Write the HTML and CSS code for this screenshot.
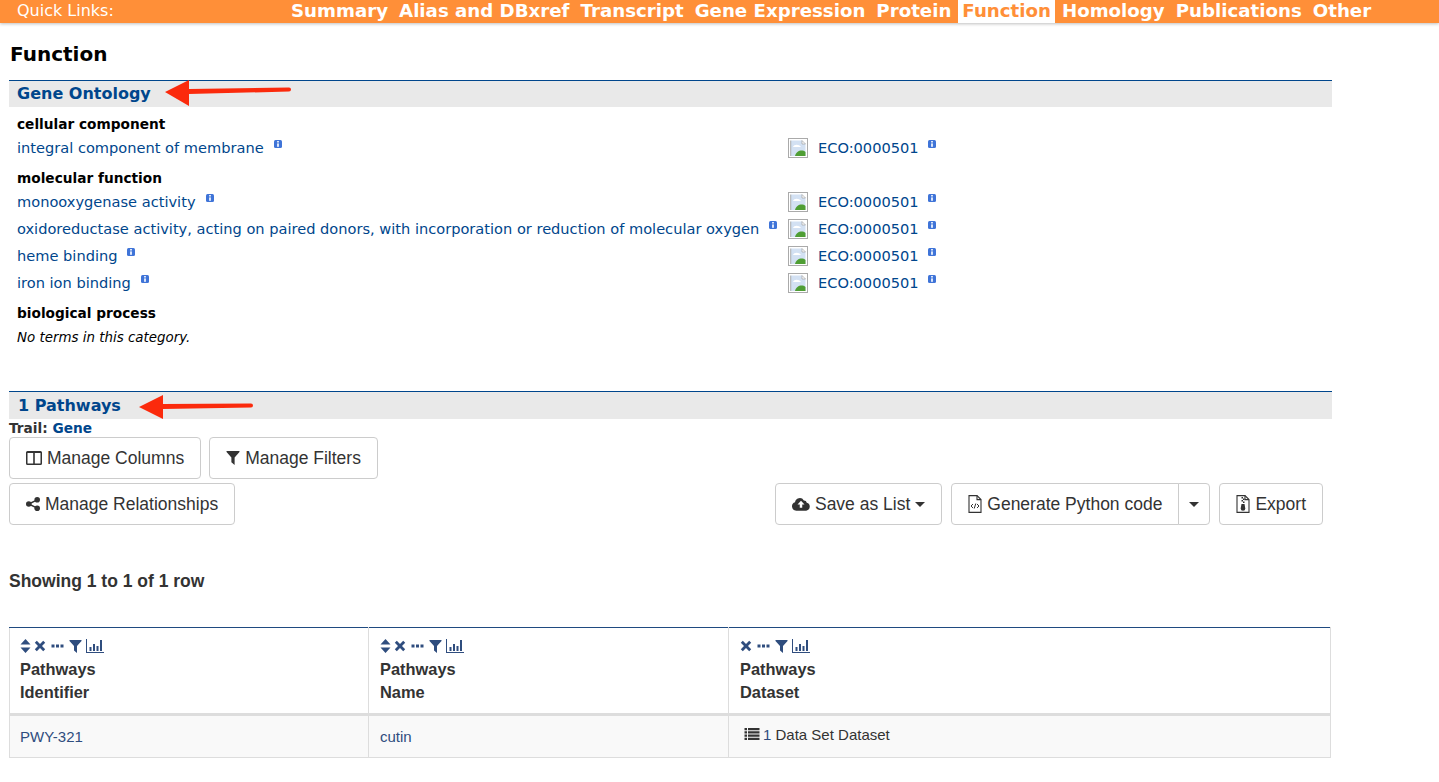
FILE: index.html
```html
<!DOCTYPE html>
<html lang="en">
<head>
  <meta charset="UTF-8">
  <title>Function</title>
  <link rel="stylesheet" href="styles.css">
</head>
<body>
  <svg class="icon-defs" width="0" height="0">
    <symbol id="broken" viewBox="0 0 20 20">
      <rect x="0.5" y="0.5" width="19" height="19" fill="#fff" stroke="#aaa"/>
      <path d="M3 2.500h11l3.500 3.500v12H3z" fill="#d3e1f3"/>
      <path d="M14 2.500v3.500h3.500z" fill="#fff" stroke="#999" stroke-width="0.6"/>
      <path d="M2.700 2.500v15.500" stroke="#888" stroke-width="0.7"/>
      <path d="M5 9c1-3 6-3 8 0z" fill="#fff"/>
      <path d="M7 18c1-5 7-7 10.500-4v4z" fill="#4f9e34"/>
    </symbol>
    <symbol id="info" viewBox="0 0 8 8">
      <rect width="8" height="8" rx="1.5" fill="#3f74d8"/>
      <rect x="3" y="1" width="2" height="1.5" fill="#dbe6fa"/>
      <rect x="3" y="3.4" width="2" height="3.4" fill="#dbe6fa"/>
    </symbol>
    <symbol id="sort" viewBox="0 0 10 14">
      <path d="M5 0l5 5.500H0zM5 14L0 8.500h10z"/>
    </symbol>
    <symbol id="close" viewBox="0 0 12 12">
      <path d="M2.800 0.800L6 4l3.200-3.200 2 2L8 6l3.200 3.200-2 2L6 8l-3.200 3.200-2-2L4 6 0.800 2.800z"/>
    </symbol>
    <symbol id="dots" viewBox="0 0 12 4">
      <path d="M0 0.500h3v3H0zM4.500 0.500h3v3h-3zM9 0.500h3v3H9z"/>
    </symbol>
    <symbol id="filter" viewBox="0 0 12 13">
      <path d="M0 0h12v1L7.500 6v7l-3-2.500V6L0 1z"/>
    </symbol>
    <symbol id="chart" viewBox="0 0 18 14">
      <path d="M0 0h1v13h17v1H0z"/>
      <path d="M3.500 8h2v4h-2zM7 5h2v7H7zM10.500 7h2v5h-2zM14 1h2v11h-2z"/>
    </symbol>
    <symbol id="columns" viewBox="0 0 16 14">
      <path fill-rule="evenodd" d="M1.500 0h13A1.500 1.500 0 0 1 16 1.500v11a1.500 1.500 0 0 1-1.500 1.500h-13A1.500 1.500 0 0 1 0 12.500v-11A1.500 1.500 0 0 1 1.500 0zM1.500 2v10.500h5.700V2zM8.800 2v10.500h5.700V2z"/>
    </symbol>
    <symbol id="share" viewBox="0 0 15 15">
      <circle cx="3" cy="7.500" r="3"/>
      <circle cx="12" cy="3" r="3"/>
      <circle cx="12" cy="12" r="3"/>
      <path d="M3 7.500L12 3M3 7.500L12 12" stroke="currentColor" stroke-width="1.500"/>
    </symbol>
    <symbol id="cloud" viewBox="0 0 19 14">
      <path fill-rule="evenodd" d="M4.500 14A4.500 4.500 0 0 1 3.200 5.200 5 5 0 0 1 12.500 3.200 3 3 0 0 1 15.600 5.600 4.300 4.300 0 0 1 15 14zM9.500 3.500L5.800 7.500h2.400v3.500h2.600V7.500h2.400z"/>
    </symbol>
    <symbol id="code-file" viewBox="0 0 14 18">
      <path fill="none" stroke="currentColor" stroke-width="1.100" d="M1 0.600h8l4 4v12.800H1z"/>
      <path fill="none" stroke="currentColor" stroke-width="1.100" d="M9 0.600v4h4"/>
      <path fill="none" stroke="currentColor" stroke-width="1" d="M5 9l-2 2 2 2M9 9l2 2-2 2M7.800 8.500l-1.600 5"/>
    </symbol>
    <symbol id="zip-file" viewBox="0 0 14 18">
      <path fill="none" stroke="currentColor" stroke-width="1.100" d="M1 0.600h8l4 4v12.800H1z"/>
      <path fill="none" stroke="currentColor" stroke-width="1.100" d="M9 0.600v4h4"/>
      <path d="M5.500 2h1.500v1.500H5.500zM7 3.500h1.500V5H7zM5.500 5h1.500v1.500H5.500zM7 6.500h1.500V8H7z"/>
      <path d="M5.500 9h3l0.800 4.500a2.300 2.300 0 1 1-4.600 0z"/>
    </symbol>
    <symbol id="list" viewBox="0 0 15 12">
      <path d="M0 0h2.500v2.200H0zM3.500 0H15v2.200H3.500zM0 3.300h2.500v2.200H0zM3.500 3.300H15v2.200H3.500zM0 6.600h2.500v2.200H0zM3.500 6.600H15v2.200H3.500zM0 9.800h2.500V12H0zM3.500 9.800H15V12H3.500z"/>
    </symbol>
  </svg>

  <nav class="quick-links">
    <span class="quick-label">Quick Links:</span>
    <div class="quick-menu">
      <a href="#">Summary</a>
      <a href="#">Alias and DBxref</a>
      <a href="#">Transcript</a>
      <a href="#">Gene Expression</a>
      <a href="#">Protein</a>
      <a href="#" class="active">Function</a>
      <a href="#">Homology</a>
      <a href="#">Publications</a>
      <a href="#">Other</a>
    </div>
  </nav>

  <main class="page">
    <h1>Function</h1>

    <section class="report go-report">
      <h2 class="report-title"><a href="#">Gene Ontology</a></h2>
      <svg class="arrow arrow-go" width="126" height="28" viewBox="0 0 126 28"><path d="M0 13L24 1v9l100-1.500a1.500 1.500 0 0 1 0 4L24 15v12z" fill="#fb2a0c"/></svg>

      <h3 class="go-cat">cellular component</h3>
      <div class="go-row">
        <div class="go-term"><a href="#">integral component of membrane</a><svg class="info"><use href="#info"/></svg></div>
        <div class="go-eco"><svg class="broken"><use href="#broken"/></svg><a href="#">ECO:0000501</a><svg class="info"><use href="#info"/></svg></div>
      </div>

      <h3 class="go-cat">molecular function</h3>
      <div class="go-row">
        <div class="go-term"><a href="#">monooxygenase activity</a><svg class="info"><use href="#info"/></svg></div>
        <div class="go-eco"><svg class="broken"><use href="#broken"/></svg><a href="#">ECO:0000501</a><svg class="info"><use href="#info"/></svg></div>
      </div>
      <div class="go-row">
        <div class="go-term"><a href="#">oxidoreductase activity, acting on paired donors, with incorporation or reduction of molecular oxygen</a><svg class="info"><use href="#info"/></svg></div>
        <div class="go-eco"><svg class="broken"><use href="#broken"/></svg><a href="#">ECO:0000501</a><svg class="info"><use href="#info"/></svg></div>
      </div>
      <div class="go-row">
        <div class="go-term"><a href="#">heme binding</a><svg class="info"><use href="#info"/></svg></div>
        <div class="go-eco"><svg class="broken"><use href="#broken"/></svg><a href="#">ECO:0000501</a><svg class="info"><use href="#info"/></svg></div>
      </div>
      <div class="go-row">
        <div class="go-term"><a href="#">iron ion binding</a><svg class="info"><use href="#info"/></svg></div>
        <div class="go-eco"><svg class="broken"><use href="#broken"/></svg><a href="#">ECO:0000501</a><svg class="info"><use href="#info"/></svg></div>
      </div>

      <h3 class="go-cat">biological process</h3>
      <p class="go-empty">No terms in this category.</p>
    </section>

    <section class="report pathways-report">
      <h2 class="report-title"><a href="#"><span class="num">1</span> Pathways</a></h2>
      <svg class="arrow arrow-path" width="114" height="24" viewBox="0 0 114 24"><path d="M0 12L24 0v9l88-.5a1.500 1.500 0 0 1 0 4L24 14v10z" fill="#fb2a0c"/></svg>
      <div class="trail">Trail: <a href="#">Gene</a></div>

      <div class="toolbar">
        <div class="toolbar-row">
          <button class="btn"><svg class="btn-icon"><use href="#columns"/></svg>Manage Columns</button>
          <button class="btn"><svg class="btn-icon icon-narrow"><use href="#filter"/></svg>Manage Filters</button>
        </div>
        <div class="toolbar-row">
          <button class="btn"><svg class="btn-icon icon-narrow"><use href="#share"/></svg>Manage Relationships</button>
          <div class="toolbar-right">
            <button class="btn"><svg class="btn-icon icon-wide"><use href="#cloud"/></svg>Save as List<span class="caret"></span></button>
            <div class="btn-group">
              <button class="btn"><svg class="btn-icon icon-file"><use href="#code-file"/></svg>Generate Python code</button>
              <button class="btn btn-caret"><span class="caret"></span></button>
            </div>
            <button class="btn"><svg class="btn-icon icon-file"><use href="#zip-file"/></svg>Export</button>
          </div>
        </div>
      </div>

      <div class="showing">Showing 1 to 1 of 1 row</div>

      <table class="results">
        <thead>
          <tr>
            <th class="col-id">
              <div class="th-tools">
                <svg class="t-sort"><use href="#sort"/></svg>
                <svg class="t-close"><use href="#close"/></svg>
                <svg class="t-dots"><use href="#dots"/></svg>
                <svg class="t-filter"><use href="#filter"/></svg>
                <svg class="t-chart"><use href="#chart"/></svg>
              </div>
              Pathways<br>Identifier
            </th>
            <th class="col-name">
              <div class="th-tools">
                <svg class="t-sort"><use href="#sort"/></svg>
                <svg class="t-close"><use href="#close"/></svg>
                <svg class="t-dots"><use href="#dots"/></svg>
                <svg class="t-filter"><use href="#filter"/></svg>
                <svg class="t-chart"><use href="#chart"/></svg>
              </div>
              Pathways<br>Name
            </th>
            <th>
              <div class="th-tools">
                <svg class="t-close"><use href="#close"/></svg>
                <svg class="t-dots"><use href="#dots"/></svg>
                <svg class="t-filter"><use href="#filter"/></svg>
                <svg class="t-chart"><use href="#chart"/></svg>
              </div>
              Pathways<br>Dataset
            </th>
          </tr>
        </thead>
        <tbody>
          <tr>
            <td><a href="#">PWY-321</a></td>
            <td><a href="#">cutin</a></td>
            <td class="cell-dataset"><svg class="t-list"><use href="#list"/></svg><a href="#">1</a> Data Set Dataset</td>
          </tr>
        </tbody>
      </table>
    </section>
  </main>
</body>
</html>
```

FILE: styles.css
```css
* {
  box-sizing: border-box;
}

body {
  margin: 0;
  font-family: "DejaVu Sans", sans-serif;
  color: #000;
  background: #fff;
  overflow: hidden;
}

a {
  color: #00468c;
  text-decoration: none;
}

.icon-defs {
  position: absolute;
}

.quick-links {
  display: flex;
  height: 23px;
  padding-left: 17px;
  background: #ff8f38;
  box-shadow: 0 1px 3px rgba(0, 0, 0, 0.25);
  overflow: hidden;
}

.quick-label {
  width: 270px;
  color: #fff;
  font-size: 16px;
  line-height: 21px;
}

.quick-menu {
  display: flex;
  gap: 3px;
}

.quick-menu a {
  padding: 0 4px;
  color: #fff;
  font-size: 18.2px;
  font-weight: bold;
  line-height: 21px;
  white-space: nowrap;
}

.quick-menu a.active {
  background: #fff;
  color: #ff8f38;
}

.page {
  width: 1332px;
  padding-left: 9px;
}

h1 {
  margin: 17px 0 12px 1px;
  font-size: 20px;
  line-height: 28px;
}

.report {
  position: relative;
}

.report-title {
  height: 27px;
  margin: 0;
  padding-left: 8px;
  border-top: 1px solid #00468c;
  background: #e9e9e9;
  font-size: 16px;
  line-height: 26px;
}

.arrow {
  position: absolute;
}

.arrow-go {
  left: 156px;
  top: -1px;
}

.arrow-path {
  left: 130px;
  top: 4px;
}

.go-report {
  height: 311px;
}

.go-cat {
  margin: 8px 0 1px 8px;
  font-size: 13.7px;
  line-height: 18px;
}

.go-row {
  display: flex;
  align-items: center;
  height: 27px;
  padding-left: 8px;
  font-size: 14.6px;
}

.go-term {
  width: 771px;
  white-space: nowrap;
}

.go-eco {
  display: flex;
  align-items: center;
}

.broken {
  width: 20px;
  height: 20px;
  margin-right: 10px;
}

.info {
  width: 8px;
  height: 8px;
  margin-left: 10px;
  vertical-align: 5px;
}

.go-eco .info {
  align-self: flex-start;
  margin-top: 2px;
  margin-left: 9px;
}

.go-empty {
  margin: 7px 0 0 8px;
  font-size: 13.4px;
  font-style: italic;
  line-height: 18px;
}

.pathways-report {
  font-family: "Liberation Sans", sans-serif;
  color: #333;
}

.pathways-report .report-title {
  height: 28px;
  padding-left: 9px;
  font-family: "DejaVu Sans", sans-serif;
  line-height: 28px;
}

.trail {
  height: 18px;
  font-family: "DejaVu Sans", sans-serif;
  font-size: 13.7px;
  font-weight: bold;
  line-height: 19px;
}

.toolbar {
  display: flex;
  flex-direction: column;
  gap: 4px;
  width: 1314px;
}

.toolbar-row {
  display: flex;
  gap: 8px;
}

.toolbar-right {
  display: flex;
  gap: 9px;
  margin-left: auto;
}

.btn-group {
  display: flex;
}

.btn-group .btn:first-child {
  border-radius: 4px 0 0 4px;
}

.btn-group .btn:last-child {
  margin-left: -1px;
  border-radius: 0 4px 4px 0;
}

.btn {
  display: inline-flex;
  align-items: center;
  height: 42px;
  padding: 0 16px;
  border: 1px solid #ccc;
  border-radius: 4px;
  background: #fff;
  color: #333;
  font-family: "Liberation Sans", sans-serif;
  font-size: 17.5px;
}

.btn-icon {
  width: 16px;
  height: 14px;
  margin-right: 5px;
  fill: #333;
  color: #333;
}

.icon-narrow {
  width: 14px;
}

.icon-wide {
  width: 18px;
}

.icon-file {
  width: 14px;
  height: 18px;
}

.btn-caret {
  padding: 0 10px;
}

.caret {
  width: 0;
  height: 0;
  margin-left: 5px;
  border-top: 5px solid #333;
  border-left: 5px solid transparent;
  border-right: 5px solid transparent;
}

.btn-caret .caret {
  margin-left: 0;
}

.showing {
  margin-top: 46px;
  font-size: 17.5px;
  font-weight: bold;
  line-height: 20px;
}

.results {
  width: 1322px;
  margin-top: 36px;
  border-collapse: collapse;
  table-layout: fixed;
  font-size: 16.4px;
}

.results th {
  height: 87px;
  padding: 8px 10px 0;
  border: 1px solid #ddd;
  border-top: 1px solid #1f4a80;
  border-bottom: 3px solid #ddd;
  font-weight: bold;
  line-height: 23px;
  text-align: left;
  vertical-align: top;
}

.results th + th {
  padding-left: 11px;
}

.col-id {
  width: 359px;
}

.col-name {
  width: 360px;
}

.th-tools {
  display: flex;
  align-items: center;
  gap: 3px;
  height: 22px;
  padding-bottom: 2px;
  fill: #2f4d7e;
}

.t-sort {
  width: 11px;
  height: 14px;
}

.t-close {
  width: 12px;
  height: 12px;
}

.t-dots {
  width: 13px;
  height: 4px;
  margin-left: 2px;
}

.t-filter {
  width: 13px;
  height: 13px;
  margin-left: 2px;
}

.t-chart {
  width: 18px;
  height: 14px;
  margin-left: 1px;
}

.results td {
  height: 43px;
  padding: 0 10px;
  border: 1px solid #ddd;
  background: #f9f9f9;
  font-size: 15px;
  vertical-align: middle;
}

.results td + td {
  padding-left: 11px;
}

.results td a {
  color: #2f4d7e;
}

.results .cell-dataset {
  padding-top: 10px;
  padding-left: 15px;
  vertical-align: top;
}

.t-list {
  width: 16px;
  height: 12px;
  margin-right: 3px;
  fill: #333;
}
```
